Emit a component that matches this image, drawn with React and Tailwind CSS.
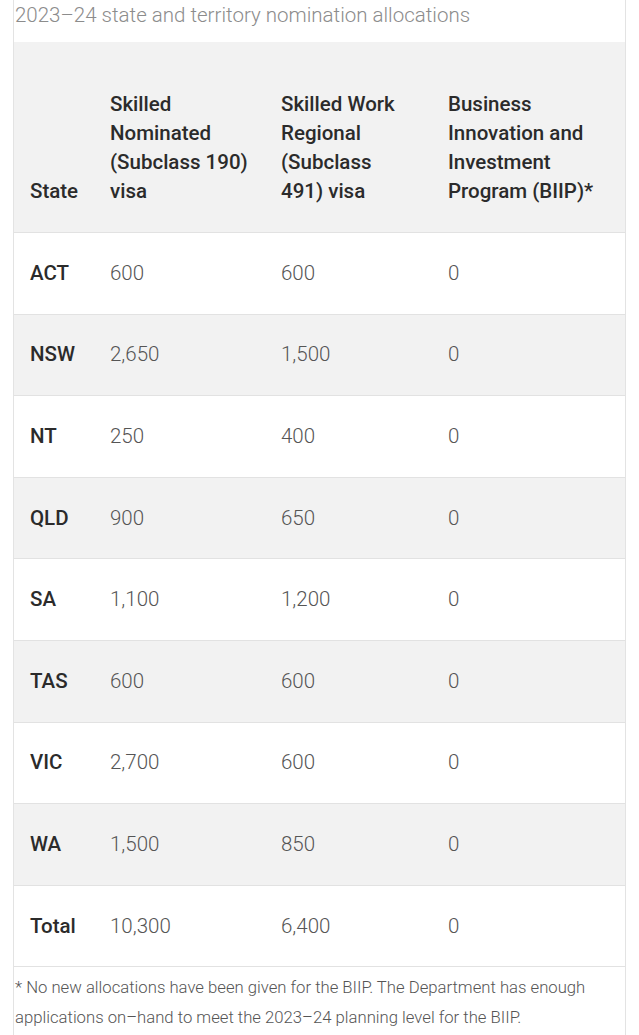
const rows = [
    ['ACT', '600', '600', '0'],
    ['NSW', '2,650', '1,500', '0'],
    ['NT', '250', '400', '0'],
    ['QLD', '900', '650', '0'],
    ['SA', '1,100', '1,200', '0'],
    ['TAS', '600', '600', '0'],
    ['VIC', '2,700', '600', '0'],
    ['WA', '1,500', '850', '0'],
    ['Total', '10,300', '6,400', '0'],
];

const App = () => {
    return (
        <div className="w-[639px] h-[1035px] bg-white overflow-hidden" style={{ fontFamily: 'Roboto, "Liberation Sans", sans-serif' }}>
            <div className="ml-[13px] w-[613px] border-x border-b border-[#e3e3e3]">
                {/* Caption */}
                <div className="h-[42px] pl-[1px] text-[20.5px] leading-[30px] font-light text-[#8c8c8c] whitespace-nowrap">
                    2023–24 state and territory nomination allocations
                </div>

                <table className="w-full table-fixed border-collapse">
                    <colgroup>
                        <col className="w-[80px]" />
                        <col className="w-[171px]" />
                        <col className="w-[167px]" />
                        <col />
                    </colgroup>
                    <thead>
                        <tr className="bg-[#f2f2f2] border-b border-[#e2e2e2] text-[20.5px] leading-[29px] text-[#2b2b2b] text-left align-bottom">
                            <th className="pl-4 pr-1 pt-[48px] pb-[26px] font-medium">State</th>
                            <th className="pl-4 pr-2 pt-[48px] pb-[26px] font-medium">Skilled Nominated (Subclass 190) visa</th>
                            <th className="pl-4 pr-5 pt-[48px] pb-[26px] font-medium">Skilled Work Regional (Subclass 491) visa</th>
                            <th className="pl-4 pr-4 pt-[48px] pb-[26px] font-medium">Business Innovation and Investment Program (BIIP)*</th>
                        </tr>
                    </thead>
                    <tbody>
                        {rows.map((r, i) => (
                            <tr
                                key={r[0]}
                                className={`h-[81.6px] border-b border-[#e2e2e2] text-[20.5px] leading-[29px] ${i % 2 === 1 ? 'bg-[#f2f2f2]' : 'bg-white'}`}
                            >
                                <td className="pl-4 font-medium text-[#2b2b2b]">{r[0]}</td>
                                <td className="pl-4 font-light text-[#555]">{r[1]}</td>
                                <td className="pl-4 font-light text-[#555]">{r[2]}</td>
                                <td className="pl-4 font-light text-[#555]">{r[3]}</td>
                            </tr>
                        ))}
                    </tbody>
                </table>

                {/* Footnote */}
                <p className="pt-[6px] pb-[2px] pl-[1px] pr-2 text-[16.7px] leading-[30px] font-light text-[#555]">
                    * No new allocations have been given for the BIIP. The Department has enough applications on–hand to meet the 2023–24 planning level for the BIIP.
                </p>
            </div>
        </div>
    );
};

export default App;
